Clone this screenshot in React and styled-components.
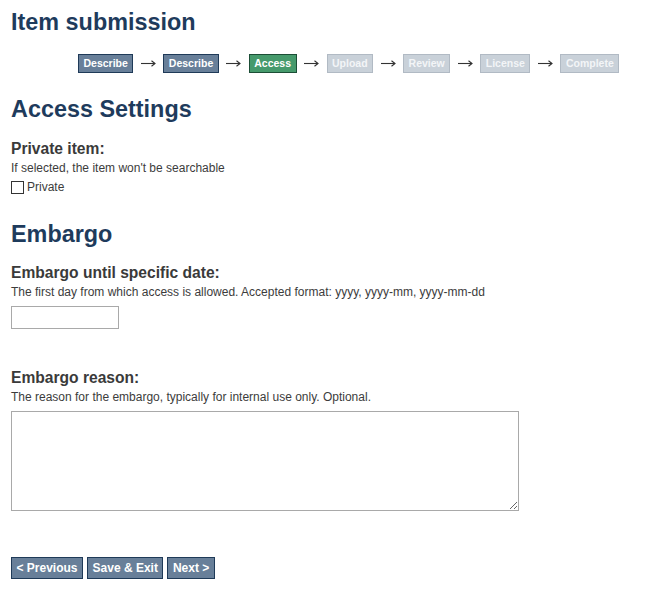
import React from "react";
import styled, { createGlobalStyle } from "styled-components";

const Global = createGlobalStyle`
  html, body { margin: 0; padding: 0; background: #fff; }
  body { font-family: "Liberation Sans", Arial, sans-serif; color: #333; }
`;

const Page = styled.div`
  padding: 8px 11px 20px 11px;
  display: flex;
  flex-direction: column;
  align-items: flex-start;
`;

const Title = styled.h1`
  margin: 0;
  font-size: 23.4px;
  line-height: 28px;
  font-weight: bold;
  color: #1e3b5c;
`;

const SectionTitle = styled.h2`
  margin: ${(p) => p.$top}px 0 0 0;
  font-size: 23.4px;
  line-height: 28px;
  font-weight: bold;
  color: #1e3b5c;
`;

const FieldLabel = styled.h3`
  margin: ${(p) => p.$top}px 0 0 0;
  font-size: 15.6px;
  line-height: 18px;
  font-weight: bold;
  color: #3a3a3a;
`;

const Help = styled.div`
  margin-top: 3px;
  font-size: 12px;
  line-height: 15px;
  color: #3c3c3c;
`;

const Steps = styled.div`
  margin: 18px 0 0 67px;
  display: flex;
  align-items: center;
`;

const stepColors = {
  done: { bg: "#687f99", border: "#1f3a58", fg: "#fff" },
  current: { bg: "#469a6c", border: "#1c4e36", fg: "#fff" },
  todo: { bg: "#c9d1d9", border: "#b1bac4", fg: "#f3f5f7" },
};

const Step = styled.span`
  display: inline-block;
  padding: 2px 4.5px;
  font-size: 10.5px;
  line-height: 13px;
  font-weight: bold;
  background: ${(p) => stepColors[p.$state].bg};
  border: 1px solid ${(p) => stepColors[p.$state].border};
  color: ${(p) => stepColors[p.$state].fg};
`;

const ArrowWrap = styled.span`
  width: 30px;
  display: flex;
  justify-content: center;
  align-items: center;
`;

const Arrow = () => (
  <ArrowWrap>
    <svg width="15" height="7" viewBox="0 0 15 7" aria-hidden="true">
      <path d="M0 3.5H14" stroke="#333" strokeWidth="1.1" />
      <path d="M10.5 0.8L14 3.5L10.5 6.2" stroke="#333" strokeWidth="1.1" fill="none" />
    </svg>
  </ArrowWrap>
);

const CheckRow = styled.label`
  margin-top: 4px;
  display: flex;
  align-items: center;
  gap: 3px;
  font-size: 12px;
  line-height: 15px;
  color: #3c3c3c;
`;

const Box = styled.span`
  width: 11px;
  height: 11px;
  border: 1px solid #333;
  background: #fff;
  display: inline-block;
`;

const DateInput = styled.input`
  margin-top: 6px;
  width: 108px;
  height: 23px;
  box-sizing: border-box;
  border: 1px solid #a9a9a9;
  padding: 2px 4px;
  font-family: inherit;
  font-size: 12px;
  outline: none;
`;

const Reason = styled.textarea`
  margin-top: 6px;
  width: 508px;
  height: 100px;
  box-sizing: border-box;
  border: 1px solid #a9a9a9;
  font-family: inherit;
  font-size: 12px;
  resize: both;
  outline: none;
`;

const Actions = styled.div`
  margin-top: 46px;
  display: flex;
  gap: 4px;
`;

const Button = styled.button`
  height: 22px;
  padding: 0 4.5px;
  background: #687f99;
  border: 1px solid #1f3a58;
  color: #fff;
  font-family: "Liberation Sans", Arial, sans-serif;
  font-weight: bold;
  font-size: 12px;
  line-height: 20px;
  border-radius: 0;
  cursor: pointer;
`;

const steps = [
  ["Describe", "done"],
  ["Describe", "done"],
  ["Access", "current"],
  ["Upload", "todo"],
  ["Review", "todo"],
  ["License", "todo"],
  ["Complete", "todo"],
];

export default function App() {
  return (
    <>
      <Global />
      <Page>
        <Title>Item submission</Title>
        <Steps>
          {steps.map(([name, state], i) => (
            <React.Fragment key={i}>
              {i > 0 && <Arrow />}
              <Step $state={state}>{name}</Step>
            </React.Fragment>
          ))}
        </Steps>
        <SectionTitle $top={22}>Access Settings</SectionTitle>
        <FieldLabel $top={17}>Private item:</FieldLabel>
        <Help>If selected, the item won't be searchable</Help>
        <CheckRow>
          <Box />
          Private
        </CheckRow>
        <SectionTitle $top={25}>Embargo</SectionTitle>
        <FieldLabel $top={16}>Embargo until specific date:</FieldLabel>
        <Help>The first day from which access is allowed. Accepted format: yyyy, yyyy-mm, yyyy-mm-dd</Help>
        <DateInput type="text" />
        <FieldLabel $top={40}>Embargo reason:</FieldLabel>
        <Help>The reason for the embargo, typically for internal use only. Optional.</Help>
        <Reason />
        <Actions>
          <Button>&lt; Previous</Button>
          <Button>Save &amp; Exit</Button>
          <Button>Next &gt;</Button>
        </Actions>
      </Page>
    </>
  );
}
